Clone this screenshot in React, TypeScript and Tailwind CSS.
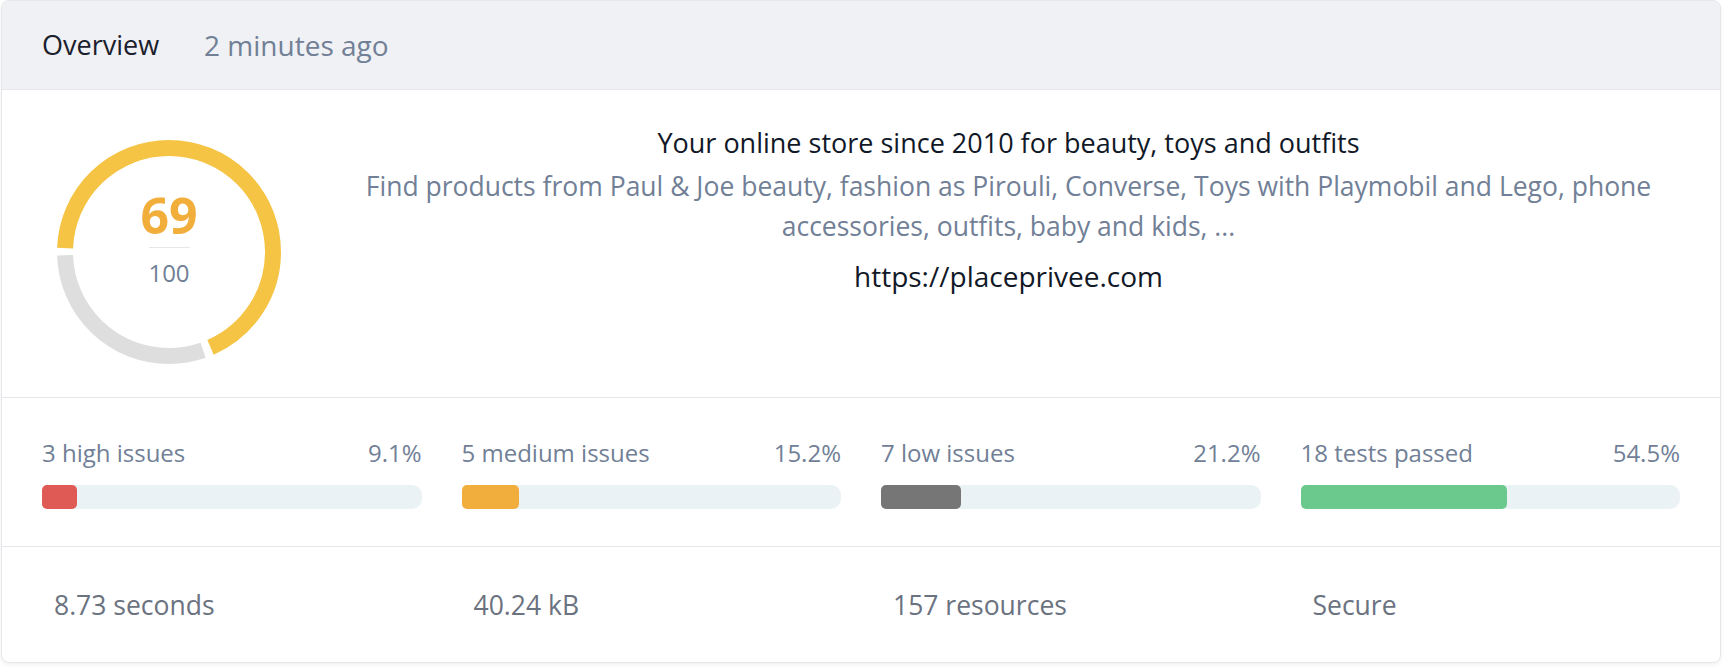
import React from "react";

const font = { fontFamily: '"Open Sans", "Liberation Sans", sans-serif' };

const stats = [
  { label: "3 high issues", pct: 9.1, color: "bg-[#df5a55]" },
  { label: "5 medium issues", pct: 15.2, color: "bg-[#f2ae3d]" },
  { label: "7 low issues", pct: 21.2, color: "bg-[#767676]" },
  { label: "18 tests passed", pct: 54.5, color: "bg-[#6bc98d]" },
];

const metrics = ["8.73 seconds", "40.24 kB", "157 resources", "Secure"];

const Gauge = ({ score }: { score: number }) => {
  const r = 104;
  const c = 2 * Math.PI * r;
  const gap = 8;
  const filled = (score / 100) * c;
  return (
    <div className="relative w-[224px] h-[224px] shrink-0 mt-[17px]">
      <svg width="224" height="224" viewBox="0 0 224 224" className="absolute inset-0">
        <g transform="rotate(180 112 112)">
          <circle
            cx="112"
            cy="112"
            r={r}
            fill="none"
            stroke="#f5c445"
            strokeWidth="16"
            strokeDasharray={`${filled - gap} ${c}`}
            strokeDashoffset={-gap / 2}
          />
          <circle
            cx="112"
            cy="112"
            r={r}
            fill="none"
            stroke="#dedede"
            strokeWidth="16"
            strokeDasharray={`${c - filled - gap} ${c}`}
            strokeDashoffset={-(filled + gap / 2)}
          />
        </g>
      </svg>
      <div className="absolute inset-0 flex flex-col items-center pt-[50px]">
        <span className="text-[50px] leading-none font-bold text-[#f2ae3a]">{score}</span>
        <span className="block w-[41px] h-px bg-[#e5e7eb] mt-[7px]" />
        <span className="text-[24px] leading-none text-[#718096] mt-[13px]">100</span>
      </div>
    </div>
  );
};

export default function App() {
  return (
    <div className="bg-white min-h-[670px] pl-[1px] pr-[7px]" style={font}>
      <div className="w-[1720px] h-[663px] rounded-lg border border-[#e6e7eb] shadow-[0_2px_4px_rgba(0,0,0,0.06)] overflow-hidden bg-white">
        <div className="h-[88px] bg-[#f0f1f4] flex items-center pl-10 gap-[45px]">
          <span className="text-[27px] text-[#1a202c]">Overview</span>
          <span className="text-[28px] text-[#718096]">2 minutes ago</span>
        </div>

        <div className="flex items-start border-t border-[#e6e7eb] pt-[33px] pb-[33px] pl-[55px] pr-10">
          <Gauge score={69} />
          <div className="flex-1 ml-[56px] text-center">
            <p className="text-[27px] leading-[40px] text-[#111827]">
              Your online store since 2010 for beauty, toys and outfits
            </p>
            <p className="text-[26.5px] leading-[40px] text-[#718096] mt-[3px]">
              Find products from Paul &amp; Joe beauty, fashion as Pirouli, Converse, Toys with Playmobil and Lego, phone accessories, outfits, baby and kids, ...
            </p>
            <p className="text-[28px] leading-[40px] text-[#111827] mt-[10px]">https://placeprivee.com</p>
          </div>
        </div>

        <div className="grid grid-cols-4 gap-10 px-10 pt-[39px] pb-[37px] border-t border-[#e6e7eb]">
          {stats.map((s) => (
            <div key={s.label} className="flex flex-col">
              <div className="flex justify-between text-[24px] leading-[32px] text-[#718096]">
                <span>{s.label}</span>
                <span>{s.pct}%</span>
              </div>
              <div className="mt-[16px] h-[24px] rounded-[10px] bg-[#ebf2f5]">
                <div className={`h-full rounded-[5px] ${s.color}`} style={{ width: `${s.pct}%` }} />
              </div>
            </div>
          ))}
        </div>

        <div className="grid grid-cols-4 gap-10 px-10 border-t border-[#e6e7eb] h-[118px] items-center">
          {metrics.map((m) => (
            <div key={m} className="px-3 text-[26.5px] text-[#6b7280]">
              {m}
            </div>
          ))}
        </div>
      </div>
    </div>
  );
}
